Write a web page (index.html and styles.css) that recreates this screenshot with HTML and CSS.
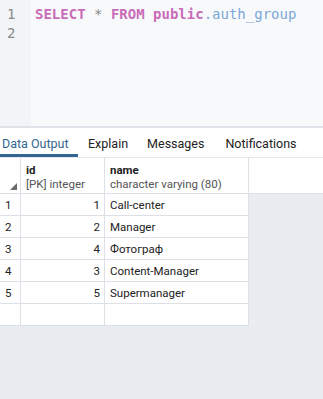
FILE: index.html
```html
<!DOCTYPE html>
<html>
<head>
<meta charset="utf-8">
<link rel="stylesheet" href="styles.css">
</head>
<body>
<div class="editor">
  <div class="gutter">
    <div class="ln">1</div>
    <div class="ln">2</div>
  </div>
  <div class="code">
    <div class="line"><span class="kw">SELECT</span> <span class="op">*</span> <span class="kw">FROM</span> <span class="kw">public</span><span class="prop">.auth_group</span></div>
    <div class="line"></div>
  </div>
</div>
<div class="tabs">
  <div class="tab active">Data Output</div>
  <div class="tab">Explain</div>
  <div class="tab">Messages</div>
  <div class="tab">Notifications</div>
</div>
<div class="output">
  <div class="grid">
    <div class="hrow">
      <div class="c rn head"><span class="tri"></span></div>
      <div class="c idc head"><div class="hname">id</div><div class="htype">[PK] integer</div></div>
      <div class="c namec head"><div class="hname">name</div><div class="htype">character varying (80)</div></div>
    </div>
    <div class="row"><div class="c rn">1</div><div class="c idc num">1</div><div class="c namec">Call-center</div></div>
    <div class="row"><div class="c rn">2</div><div class="c idc num">2</div><div class="c namec">Manager</div></div>
    <div class="row"><div class="c rn">3</div><div class="c idc num">4</div><div class="c namec">Фотограф</div></div>
    <div class="row"><div class="c rn">4</div><div class="c idc num">3</div><div class="c namec">Content-Manager</div></div>
    <div class="row"><div class="c rn">5</div><div class="c idc num">5</div><div class="c namec">Supermanager</div></div>
    <div class="row"><div class="c rn"></div><div class="c idc num"></div><div class="c namec"></div></div>
  </div>
</div>
</body>
</html>
```
FILE: styles.css
```css
html, body {
  margin: 0;
  padding: 0;
  height: 100%;
}
body {
  font-family: Roboto, "Liberation Sans", sans-serif;
  background: #e9ecf0;
  display: flex;
  flex-direction: column;
  width: 323px;
  height: 399px;
  overflow: hidden;
}
.editor {
  display: flex;
  flex: none;
  height: 126px;
  background: #f8f9fb;
  border-bottom: 2px solid #dfe2e8;
  font-family: "DejaVu Sans Mono", monospace;
  font-size: 14px;
}
.gutter {
  width: 31px;
  background: #f3f4f7;
  padding-top: 5px;
  box-sizing: border-box;
}
.ln {
  height: 19px;
  line-height: 19px;
  color: #8a8a8a;
  padding-left: 7px;
}
.code {
  flex: 1;
  padding-top: 5px;
  padding-left: 4px;
}
.line {
  height: 19px;
  line-height: 19px;
  white-space: pre;
}
.kw {
  color: #c96bb9;
  font-weight: bold;
}
.op {
  color: #8a8a8a;
}
.prop {
  color: #7aa8d8;
}
.tabs {
  display: flex;
  flex: none;
  background: #fff;
  height: 29px;
  border-bottom: 1px solid #e3e6eb;
  font-size: 12.5px;
  color: #222;
}
.tab {
  padding: 8px 9px 0 10px;
  box-sizing: border-box;
  height: 29px;
  white-space: nowrap;
}
.tab.active {
  padding-left: 2px;
  padding-right: 0;
  width: 78px;
  color: #326690;
  border-bottom: 3px solid #326690;
}
.tab:nth-child(4) {
  padding-left: 12px;
}
.output {
  flex: 1;
  background: #e9ecf0;
}
.grid {
  display: flex;
  flex-direction: column;
  font-size: 11.5px;
  color: #222;
}
.hrow {
  display: flex;
  height: 35px;
  background: #fff;
  border-bottom: 1px solid #dde0e6;
}
.row {
  display: flex;
  height: 21px;
  width: 249px;
  background: #fff;
  border-bottom: 1px solid #dde0e6;
}
.c {
  box-sizing: border-box;
  border-right: 1px solid #dde0e6;
  line-height: 22px;
  white-space: nowrap;
}
.rn {
  width: 21px;
  padding-left: 5px;
}
.idc {
  width: 84px;
}
.num {
  text-align: right;
  padding-right: 4px;
}
.namec {
  width: 144px;
  padding-left: 5px;
}
.head {
  position: relative;
  line-height: 13.5px;
  padding-top: 6px;
}
.head.idc, .head.namec {
  padding-left: 5px;
}
.hname {
  font-weight: bold;
}
.htype {
  color: #555;
}
.tri {
  position: absolute;
  right: 3px;
  bottom: 3px;
  width: 0;
  height: 0;
  border-left: 7px solid transparent;
  border-bottom: 7px solid #6b6b6b;
}
```
